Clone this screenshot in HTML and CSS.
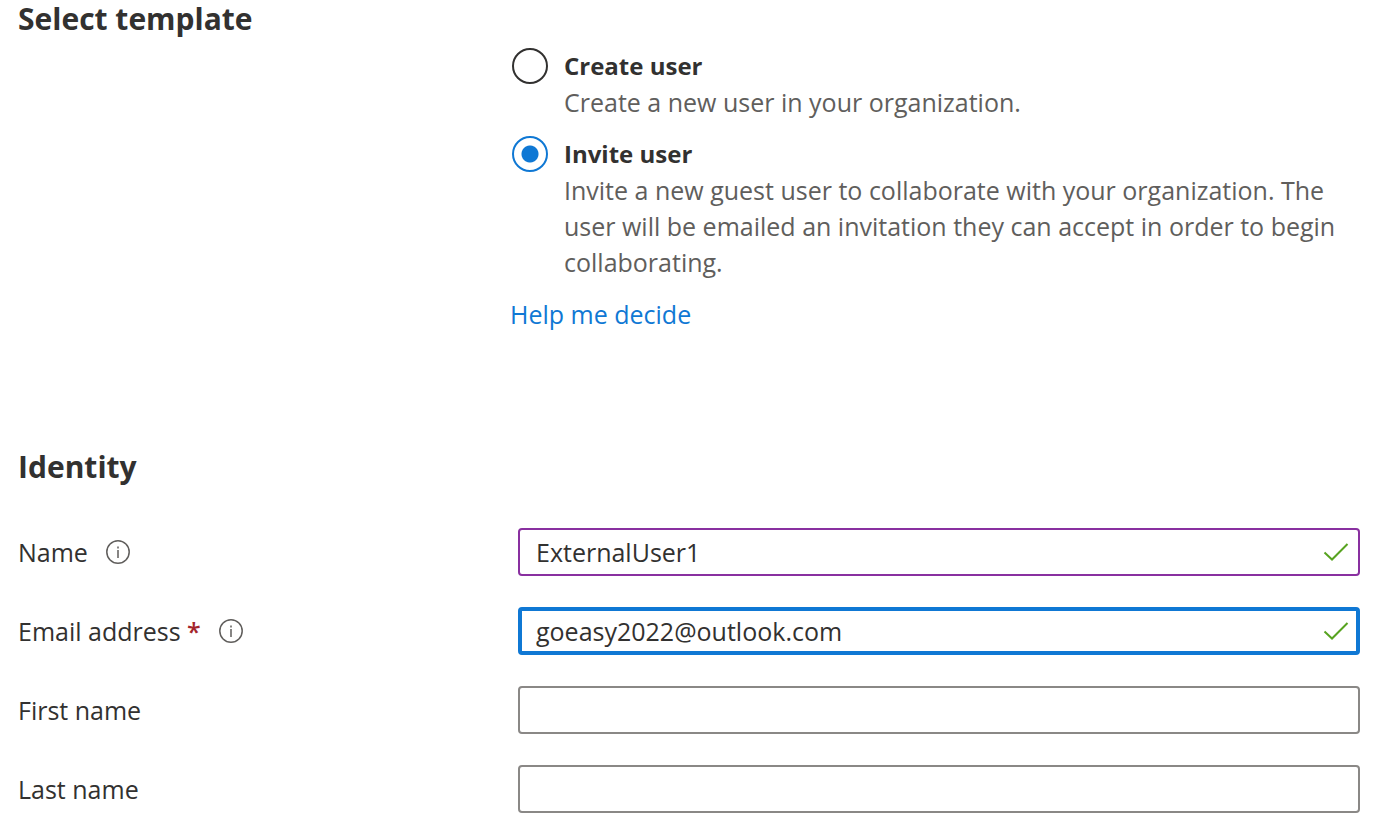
FILE: index.html
```html
<!DOCTYPE html>
<html lang="en">
<head>
<meta charset="utf-8">
<title>New user</title>
<link rel="stylesheet" href="styles.css">
</head>
<body>
<form class="page">
  <section class="template">
    <h2 class="heading" id="template-heading">Select template</h2>
    <div class="options" role="radiogroup" aria-labelledby="template-heading">
      <div class="option">
        <input class="radio" type="radio" name="template" id="create">
        <div class="option-text">
          <label class="option-title" for="create">Create user</label>
          <p class="option-note">Create a new user in your organization.</p>
        </div>
      </div>
      <div class="option">
        <input class="radio" type="radio" name="template" id="invite" checked>
        <div class="option-text">
          <label class="option-title" for="invite">Invite user</label>
          <p class="option-note">Invite a new guest user to collaborate with your organization. The user will be emailed an invitation they can accept in order to begin collaborating.</p>
        </div>
      </div>
      <a class="help" href="#help">Help me decide</a>
    </div>
  </section>
  <section class="identity">
    <h2 class="heading">Identity</h2>
    <div class="fields">
      <div class="field">
        <div class="field-label">
          <label for="name">Name</label>
          <svg class="info" viewBox="0 0 24 24" aria-hidden="true"><circle cx="12" cy="12" r="11.2"/><path d="M12 10v8M12 6.500v2"/></svg>
        </div>
        <div class="control">
          <input class="box edited" type="text" id="name" value="ExternalUser1">
          <svg class="tick" viewBox="0 0 26 20" aria-hidden="true"><path d="M1.500 10.500l7.500 7L24.500 2"/></svg>
        </div>
      </div>
      <div class="field">
        <div class="field-label">
          <label for="email">Email address <span class="required">*</span></label>
          <svg class="info" viewBox="0 0 24 24" aria-hidden="true"><circle cx="12" cy="12" r="11.2"/><path d="M12 10v8M12 6.500v2"/></svg>
        </div>
        <div class="control">
          <input class="box focused" type="text" id="email" value="goeasy2022@outlook.com">
          <svg class="tick" viewBox="0 0 26 20" aria-hidden="true"><path d="M1.500 10.500l7.500 7L24.500 2"/></svg>
        </div>
      </div>
      <div class="field">
        <div class="field-label"><label for="first">First name</label></div>
        <div class="control"><input class="box" type="text" id="first"></div>
      </div>
      <div class="field">
        <div class="field-label"><label for="last">Last name</label></div>
        <div class="control"><input class="box" type="text" id="last"></div>
      </div>
    </div>
  </section>
</form>
</body>
</html>
```
FILE: styles.css
```css
* { box-sizing: border-box; }
body {
  margin: 0;
  background: #fff;
  color: #323130;
  font-family: "Open Sans", "Noto Sans", sans-serif;
  font-size: 25px;
  line-height: 36px;
}
.page { padding: 0 20px 0 18px; }
.heading { margin: 0; font-size: 30px; line-height: 38px; font-weight: 700; }
.options { margin: 10px 0 0 492px; }
.option { display: flex; gap: 16px; margin-bottom: 16px; padding-left: 2px; }
.radio {
  appearance: none;
  flex: none;
  width: 36px;
  height: 36px;
  margin: 0;
  border: 2px solid #323130;
  border-radius: 50%;
}
.radio:checked {
  border-color: #0f78d4;
  background: radial-gradient(circle, #0f78d4 8px, #fff 9px);
}
.option-title { display: block; font-size: 24px; font-weight: 700; }
.option-note { margin: 0; color: #605e5c; }
.help { color: #0f78d4; text-decoration: none; }
.identity { margin-top: 116px; }
.fields { display: grid; gap: 31px; margin-top: 42px; }
.field { display: grid; grid-template-columns: 500px 1fr; align-items: center; }
.field-label { display: flex; align-items: center; gap: 18px; }
.required { color: #a4262c; font-weight: 600; }
.info { width: 24px; height: 24px; fill: none; stroke: #605e5c; stroke-width: 1.5; }
.control { position: relative; }
.box {
  display: block;
  width: 100%;
  height: 48px;
  padding: 0 56px 0 16px;
  border: 2px solid #8a8886;
  border-radius: 4px;
  background: #fff;
  color: inherit;
  font: inherit;
  outline: none;
}
.edited { border-color: #8930a0; }
.focused { border: 4px solid #0f78d4; padding-left: 14px; }
.tick {
  position: absolute;
  top: 14px;
  right: 11px;
  width: 26px;
  height: 20px;
  fill: none;
  stroke: #57a320;
  stroke-width: 2;
}
```
